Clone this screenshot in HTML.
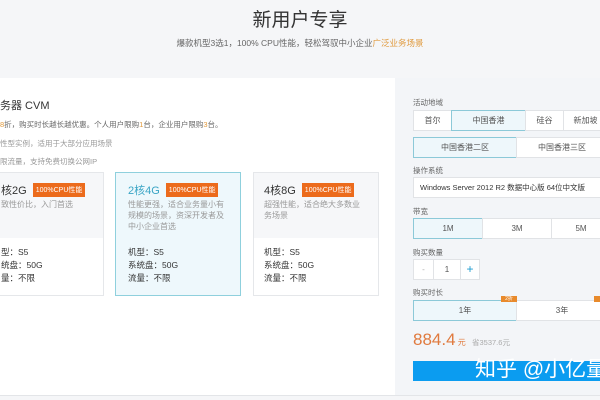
<!DOCTYPE html>
<html><head><meta charset="utf-8"><style>
*{margin:0;padding:0;box-sizing:border-box}
body{width:600px;height:400px;overflow:hidden;background:#f5f6f8;font-family:"Liberation Sans","Noto Sans CJK SC",sans-serif;position:relative;color:#333}
.a{position:absolute;white-space:nowrap}
.left{position:absolute;left:0;top:78px;width:395px;height:317px;background:#fff}
.right{position:absolute;left:395px;top:78px;width:205px;height:317px;background:#f3f5f8}
.line{position:absolute;left:0;top:395px;width:600px;height:1px;background:#e3e5e8}
.card{position:absolute;top:172px;height:124px;border:1px solid #e5e7ea;background:#fff}
.card .t{position:absolute;left:0;top:0;right:0;height:65px;background:#f6f7f9}
.card.s{border-color:#8fd0dd;background:#eef8fc}
.card.s .t{background:transparent}
.tag{display:inline-block;background:#ec6b1c;color:#fff;font-size:7px;padding:2px 3px;margin-left:6px;vertical-align:2px}
.h{font-size:11px;color:#333}
.d{font-size:8px;color:#999;line-height:11px}
.sp{font-size:8.5px;color:#333;line-height:13px}
.lb{font-size:7.5px;color:#666}
.b{position:absolute;height:21px;border:1px solid #e1e3e6;background:#fff;font-size:8px;color:#555;text-align:center;line-height:19px}
.b.on{background:#eef7fb;border-color:#8cc9d8}
</style></head><body>
<div class="a" style="left:0;width:600px;text-align:center;top:5px;font-size:19px;color:#333">新用户专享</div>
<div class="a" style="left:0;width:600px;text-align:center;top:37px;font-size:8.5px;color:#666">爆款机型3选1，100% CPU性能，轻松驾驭中小企业<span style="color:#e09a3e">广泛业务场景</span></div>
<div class="left"></div>
<div class="right"></div>
<div class="line"></div>
<div class="a" style="left:0;top:97px;font-size:11px;color:#333">务器 CVM</div>
<div class="a" style="left:0;top:119px;font-size:7.5px;color:#666"><span style="color:#e09a3e">8</span>折，购买时长越长越优惠。个人用户限购<span style="color:#e09a3e">1</span>台，企业用户限购<span style="color:#e09a3e">3</span>台。</div>
<div class="a" style="left:0;top:138px;font-size:7.5px;color:#999">性型实例，适用于大部分应用场景</div>
<div class="a" style="left:0;top:156px;font-size:7.5px;color:#999">限流量，支持免费切换公网IP</div>

<div class="card" style="left:-10px;width:114px"><div class="t"></div>
<div class="a h" style="left:10px;top:9px">核2G<span class="tag">100%CPU性能</span></div>
<div class="a d" style="left:10px;top:26px">致性价比，入门首选</div>
<div class="a sp" style="left:10px;top:73px">型：S5<br>统盘：50G<br>量：不限</div></div>

<div class="card s" style="left:115px;width:126px"><div class="t"></div>
<div class="a h" style="left:12px;top:9px;color:#3aa5c5">2核4G<span class="tag">100%CPU性能</span></div>
<div class="a d" style="left:12px;top:26px">性能更强，适合业务量小有<br>规模的场景，资深开发者及<br>中小企业首选</div>
<div class="a sp" style="left:12px;top:73px">机型：S5<br>系统盘：50G<br>流量：不限</div></div>

<div class="card" style="left:253px;width:126px"><div class="t"></div>
<div class="a h" style="left:10px;top:9px">4核8G<span class="tag">100%CPU性能</span></div>
<div class="a d" style="left:10px;top:26px">超强性能，适合绝大多数业<br>务场景</div>
<div class="a sp" style="left:10px;top:73px">机型：S5<br>系统盘：50G<br>流量：不限</div></div>

<div class="a lb" style="left:413px;top:97px">活动地域</div>
<div class="b" style="left:413px;top:110px;width:39px">首尔</div>
<div class="b on" style="left:451px;top:110px;width:75px">中国香港</div>
<div class="b" style="left:525px;top:110px;width:39px">硅谷</div>
<div class="b" style="left:563px;top:110px;width:45px">新加坡</div>
<div class="b on" style="left:413px;top:137px;width:104px">中国香港二区</div>
<div class="b" style="left:516px;top:137px;width:92px">中国香港三区</div>
<div class="a lb" style="left:413px;top:165px">操作系统</div>
<div class="b" style="left:413px;top:177px;width:195px;text-align:left;padding-left:6px;color:#333;font-size:7.5px">Windows Server 2012 R2 数据中心版 64位中文版</div>
<div class="a lb" style="left:413px;top:206px">带宽</div>
<div class="b on" style="left:413px;top:218px;width:70px">1M</div>
<div class="b" style="left:482px;top:218px;width:70px">3M</div>
<div class="b" style="left:551px;top:218px;width:60px">5M</div>
<div class="a lb" style="left:413px;top:247px">购买数量</div>
<div class="b" style="left:413px;top:259px;width:21px;color:#aaa">-</div>
<div class="b" style="left:433px;top:259px;width:28px">1</div>
<div class="b" style="left:460px;top:259px;width:20px;color:#1c9bd0;font-size:12px">+</div>
<div class="a lb" style="left:413px;top:287px">购买时长</div>
<div class="b on" style="left:413px;top:300px;width:104px">1年</div>
<div class="b" style="left:516px;top:300px;width:92px">3年</div>
<div class="a" style="left:501px;top:296px;width:16px;height:6px;background:#e88a2c;font-size:5px;color:#fff;text-align:center;line-height:6px">2折</div>
<div class="a" style="left:594px;top:296px;width:10px;height:6px;background:#e88a2c"></div>
<div class="a" style="left:413px;top:330px;font-size:17px;color:#e07a3e">884.4<span style="font-size:8px"> 元</span></div>
<div class="a" style="left:472px;top:337px;font-size:7.5px;color:#aaa">省3537.6元</div>
<div class="a" style="left:413px;top:361px;width:190px;height:20px;background:#0b9cf0"></div>
<div class="a" style="left:475px;top:358px;font-size:21px;color:#fff;line-height:24px">知乎 @小亿量</div>
</body></html>
